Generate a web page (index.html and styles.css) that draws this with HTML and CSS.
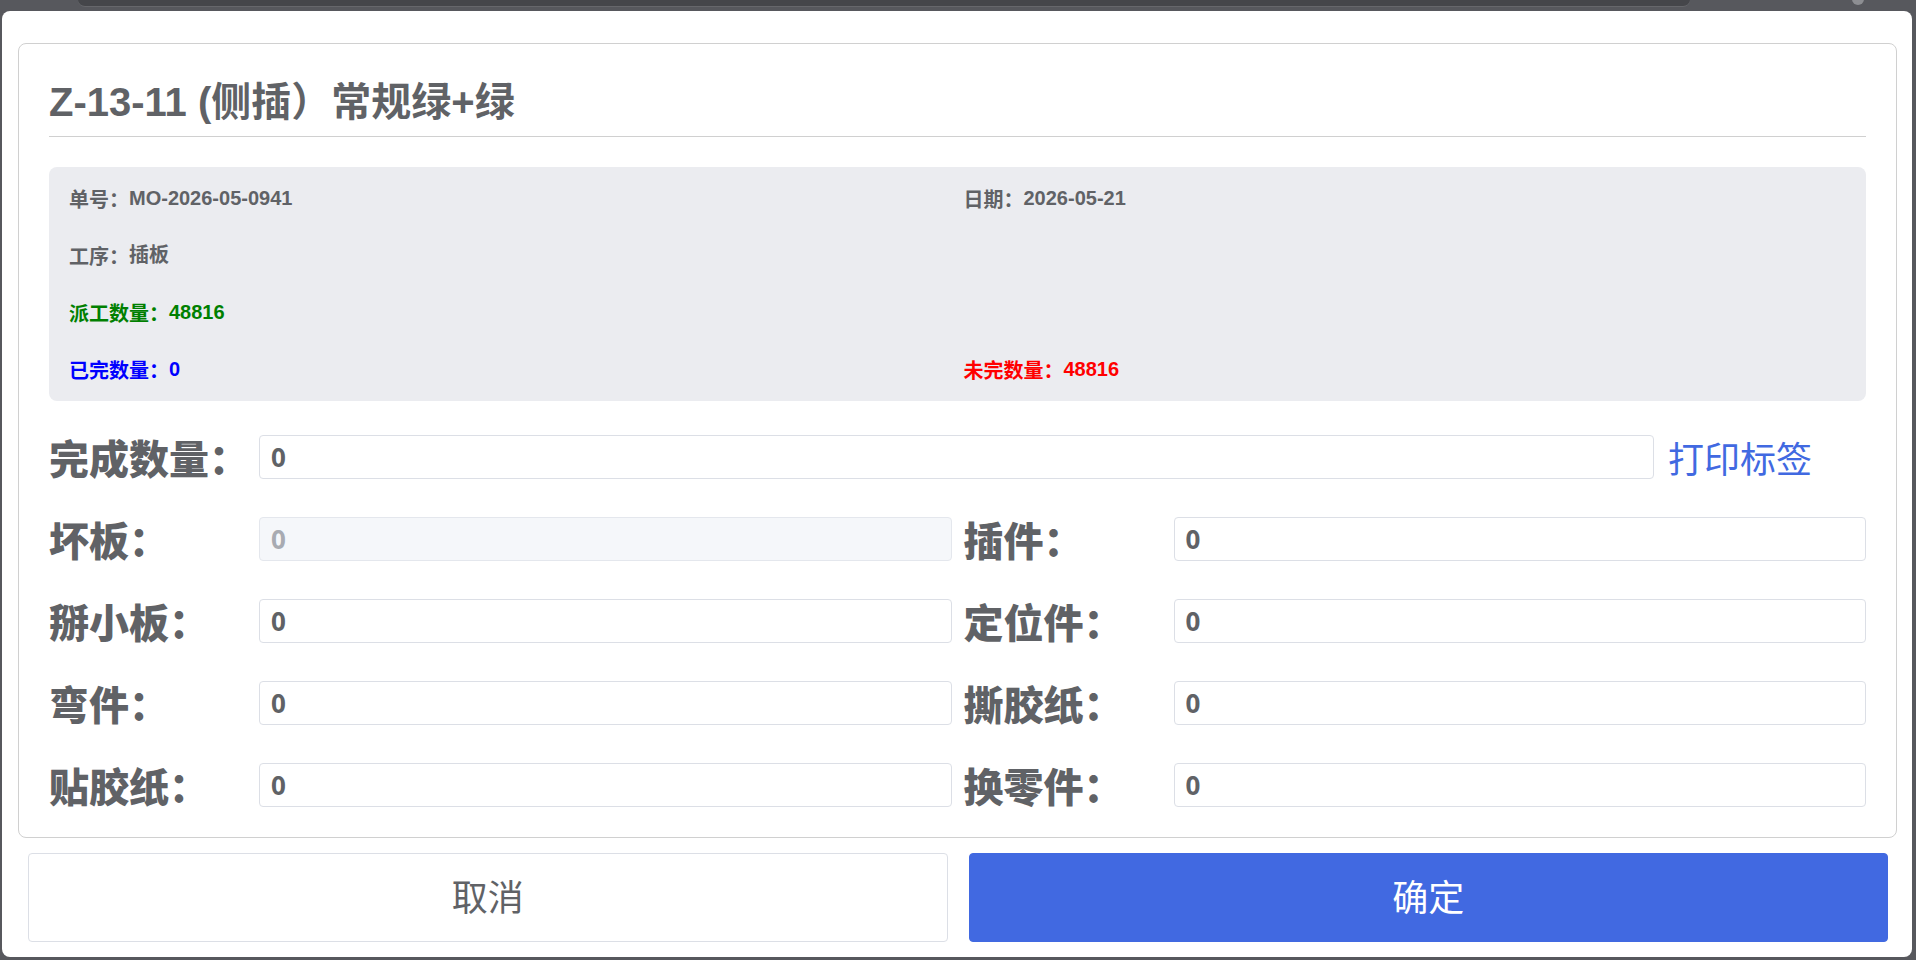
FILE: index.html
```html
<!DOCTYPE html>
<html lang="zh-CN">
<head>
  <meta charset="UTF-8">
  <meta name="viewport" content="width=device-width, initial-scale=1.0">
  <title>报工</title>
  <link rel="stylesheet" href="styles.css">
</head>
<body>

  <div class="topbar">
    <div class="tab"></div>
    <div class="dot"></div>
  </div>

  <div class="dialog">
    <div class="card">
      <h2 class="title">Z-13-11 (侧插）常规绿+绿</h2>

      <div class="info">
        <div class="info-item"><span class="k">单号：</span><span class="v">MO-2026-05-0941</span></div>
        <div class="info-item"><span class="k">日期：</span><span class="v">2026-05-21</span></div>
        <div class="info-item"><span class="k">工序：</span><span class="v">插板</span></div>
        <div class="info-item"></div>
        <div class="info-item green"><span class="k">派工数量：</span><span class="v">48816</span></div>
        <div class="info-item"></div>
        <div class="info-item blue"><span class="k">已完数量：</span><span class="v">0</span></div>
        <div class="info-item red"><span class="k">未完数量：</span><span class="v">48816</span></div>
      </div>

      <div class="form">
        <div class="form-row">
          <div class="field">
            <label>完成数量：</label>
            <input type="text" value="0">
          </div>
          <a class="print" href="#">打印标签</a>
        </div>
        <div class="form-row">
          <div class="field">
            <label>坏板：</label>
            <input type="text" value="0" disabled>
          </div>
          <div class="field">
            <label>插件：</label>
            <input type="text" value="0">
          </div>
        </div>
        <div class="form-row">
          <div class="field">
            <label>掰小板：</label>
            <input type="text" value="0">
          </div>
          <div class="field">
            <label>定位件：</label>
            <input type="text" value="0">
          </div>
        </div>
        <div class="form-row">
          <div class="field">
            <label>弯件：</label>
            <input type="text" value="0">
          </div>
          <div class="field">
            <label>撕胶纸：</label>
            <input type="text" value="0">
          </div>
        </div>
        <div class="form-row">
          <div class="field">
            <label>贴胶纸：</label>
            <input type="text" value="0">
          </div>
          <div class="field">
            <label>换零件：</label>
            <input type="text" value="0">
          </div>
        </div>
      </div>
    </div>

    <div class="actions">
      <button class="btn cancel">取消</button>
      <button class="btn ok">确定</button>
    </div>
  </div>

</body>
</html>
```

FILE: styles.css
```css
body {
  margin: 0;
  padding: 0 4px 3px 2px;
  background: #57585d;
  font-family: 'Liberation Sans', 'Noto Sans CJK SC', sans-serif;
  color: #606266;
  overflow: hidden;
}

/* dark strip above the dialog */
.topbar {
  height: 11px;
  display: flex;
}

.tab {
  margin-left: 76px;
  width: 1612px;
  height: 6px;
  background: #45464a;
  border-bottom: 1px solid #66676b;
  border-radius: 0 0 8px 8px;
}

.dot {
  margin-left: auto;
  margin-right: 48px;
  margin-top: -7px;
  width: 12px;
  height: 12px;
  border-radius: 50%;
  background: #8d8e92;
}

.dialog {
  background: #fff;
  border-radius: 8px;
  padding: 32px 15px 15px 16px;
}

.card {
  border: 1px solid #d0d0d0;
  border-radius: 8px;
  padding: 34px 30px 30px 30px;
}

.title {
  margin: 0;
  font-size: 40px;
  line-height: 48px;
  font-weight: bold;
  color: #606266;
  padding-bottom: 10px;
  border-bottom: 1px solid #d0d0d0;
}

.info {
  margin-top: 30px;
  background: #ebecf0;
  border-radius: 8px;
  padding: 16px 20px 17px 20px;
  display: grid;
  grid-template-columns: 1fr 1fr;
  column-gap: 12px;
  row-gap: 27px;
}

.info-item {
  height: 30px;
  line-height: 30px;
  font-size: 20px;
  font-weight: bold;
  color: #606266;
}

.info-item .k {
  position: relative;
  top: 2px;
}

.info-item.green { color: #008000; }
.info-item.blue { color: #0000ff; }
.info-item.red { color: #ff0000; }

.form {
  margin-top: 34px;
  display: flex;
  flex-direction: column;
  gap: 38px;
}

.form-row {
  display: flex;
  align-items: center;
  gap: 12px;
  height: 44px;
}

.field {
  flex: 1;
  display: flex;
  align-items: center;
  min-width: 0;
}

.field label {
  flex: 0 0 210px;
  font-family: 'Noto Sans CJK SC', sans-serif;
  font-size: 40px;
  font-weight: 900;
  line-height: 44px;
  color: #606266;
}

.field input {
  flex: 1;
  min-width: 0;
  height: 44px;
  box-sizing: border-box;
  border: 1px solid #dcdfe6;
  border-radius: 4px;
  padding: 0 11px;
  font-family: 'Noto Sans', 'Noto Sans CJK SC', sans-serif;
  font-size: 26px;
  font-weight: bold;
  color: #606266;
  background: #fff;
  outline: none;
}

.field input:disabled {
  background: #f5f7fa;
  border-color: #e4e7ed;
  color: #a8abb2;
}

.print {
  flex: 0 0 198px;
  margin-left: -12px;
  padding-left: 14px;
  font-family: 'Noto Sans CJK SC', sans-serif;
  font-size: 36px;
  line-height: 44px;
  color: #4169e1;
  text-decoration: none;
}

.actions {
  margin: 15px 9px 0 10px;
  display: flex;
  gap: 21px;
}

.btn {
  flex: 1;
  height: 89px;
  padding: 0 0 5px 0;
  border-radius: 4px;
  font-family: 'Noto Sans CJK SC', sans-serif;
  font-size: 36px;
  cursor: pointer;
}

.cancel {
  background: #fff;
  border: 1px solid #dcdfe6;
  color: #606266;
}

.ok {
  background: #4169e1;
  border: 1px solid #4169e1;
  color: #fff;
}
```
